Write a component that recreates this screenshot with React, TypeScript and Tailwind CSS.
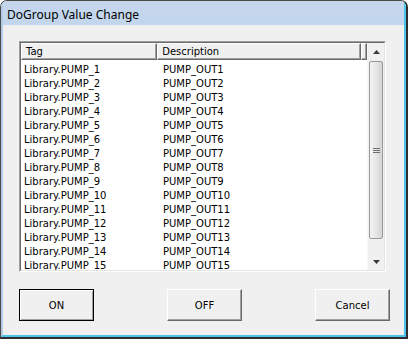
import React from "react";

const rows = Array.from({ length: 15 }, (_, i) => ({
  tag: `Library.PUMP_${i + 1}`,
  desc: `PUMP_OUT${i + 1}`,
}));

function Arrow({ up }: { up: boolean }) {
  return (
    <svg width="7" height="4" viewBox="0 0 7 4">
      {up ? (
        <polygon points="0,4 7,4 3.5,0" fill="#3a3a3a" />
      ) : (
        <polygon points="0,0 7,0 3.5,4" fill="#3a3a3a" />
      )}
    </svg>
  );
}

function Btn({ label, isDefault }: { label: string; isDefault?: boolean }) {
  return (
    <button
      className={`w-[75px] h-[32px] bg-[#f0f0f0] text-[10px] text-black ${
        isDefault
          ? "border border-black shadow-[inset_1px_1px_0_#ffffff,inset_-1px_-1px_0_#a0a0a0]"
          : "border border-t-white border-l-white border-r-[#696969] border-b-[#696969] shadow-[inset_-1px_-1px_0_#a0a0a0]"
      }`}
    >
      {label}
    </button>
  );
}

function HeaderCell({ w, label }: { w: string; label?: string }) {
  return (
    <div
      className={`${w} h-full flex items-center pl-[4px] bg-[#f0f0f0] border-t border-l border-t-white border-l-white border-r border-b border-r-[#696969] border-b-[#696969] shadow-[inset_-1px_-1px_0_#a0a0a0]`}
    >
      {label}
    </div>
  );
}

export default function App() {
  return (
    <div
      className="w-[408px] h-[339px] rounded-t-[7px] overflow-hidden border-t border-l border-[#4a4a4a] border-r-2 border-b-2 border-r-[#2f2f2f] border-b-[#2f2f2f]"
      style={{ fontFamily: '"DejaVu Sans", sans-serif' }}
    >
      <div className="h-full flex flex-col border-l-2 border-l-[#b3cbe6] border-r-2 border-r-[#4cc4ee] border-b-2 border-b-[#4cc4ee] bg-gradient-to-b from-[#c4d7ed] to-[#adc6e3]">
        <div
          className="h-[24px] flex items-center pl-[4px] pt-[4px] text-[12px] text-black"
          style={{ fontFamily: '"Noto Sans", "Open Sans", sans-serif' }}
        >
          DoGroup Value Change
        </div>
        <div className="flex-1 bg-[#f0f0f0] pl-[16px] pt-[16px]">
          <div className="w-[367px] h-[231px] border-t border-l border-[#a0a0a0] border-r border-b border-r-white border-b-white">
            <div className="w-full h-full flex border-t border-l border-[#696969] border-r border-b border-r-[#e3e3e3] border-b-[#e3e3e3] bg-white">
              <div className="flex-1 flex flex-col overflow-hidden text-[10px] text-black">
                <div className="h-[17px] flex shrink-0">
                  <HeaderCell w="w-[137px]" label="Tag" />
                  <HeaderCell w="w-[205px]" label="Description" />
                  <HeaderCell w="flex-1" />
                </div>
                <div className="pt-[2px]">
                  {rows.map((r) => (
                    <div key={r.tag} className="h-[14px] flex items-center">
                      <div className="w-[137px] pl-[3px]">{r.tag}</div>
                      <div className="pl-[5px]">{r.desc}</div>
                    </div>
                  ))}
                </div>
              </div>
              <div className="w-[17px] flex flex-col bg-[#f0f0f0] border-l border-[#f7f7f7]">
                <div className="h-[17px] flex items-center justify-center shrink-0">
                  <Arrow up />
                </div>
                <div className="h-[178px] mx-[1px] mt-[1px] rounded-[2px] border border-[#9a9a9a] bg-gradient-to-r from-[#f4f4f4] via-[#e6e6e6] to-[#d3d3d3] flex flex-col items-center justify-center gap-[1px] shrink-0">
                  <div className="w-[7px] h-[1px] bg-[#6e6e6e]" />
                  <div className="w-[7px] h-[1px] bg-[#6e6e6e]" />
                  <div className="w-[7px] h-[1px] bg-[#6e6e6e]" />
                </div>
                <div className="flex-1" />
                <div className="h-[17px] flex items-center justify-center shrink-0">
                  <Arrow up={false} />
                </div>
              </div>
            </div>
          </div>
          <div className="mt-[17px] flex gap-[73px]">
            <Btn label="ON" isDefault />
            <Btn label="OFF" />
            <Btn label="Cancel" />
          </div>
        </div>
      </div>
    </div>
  );
}
